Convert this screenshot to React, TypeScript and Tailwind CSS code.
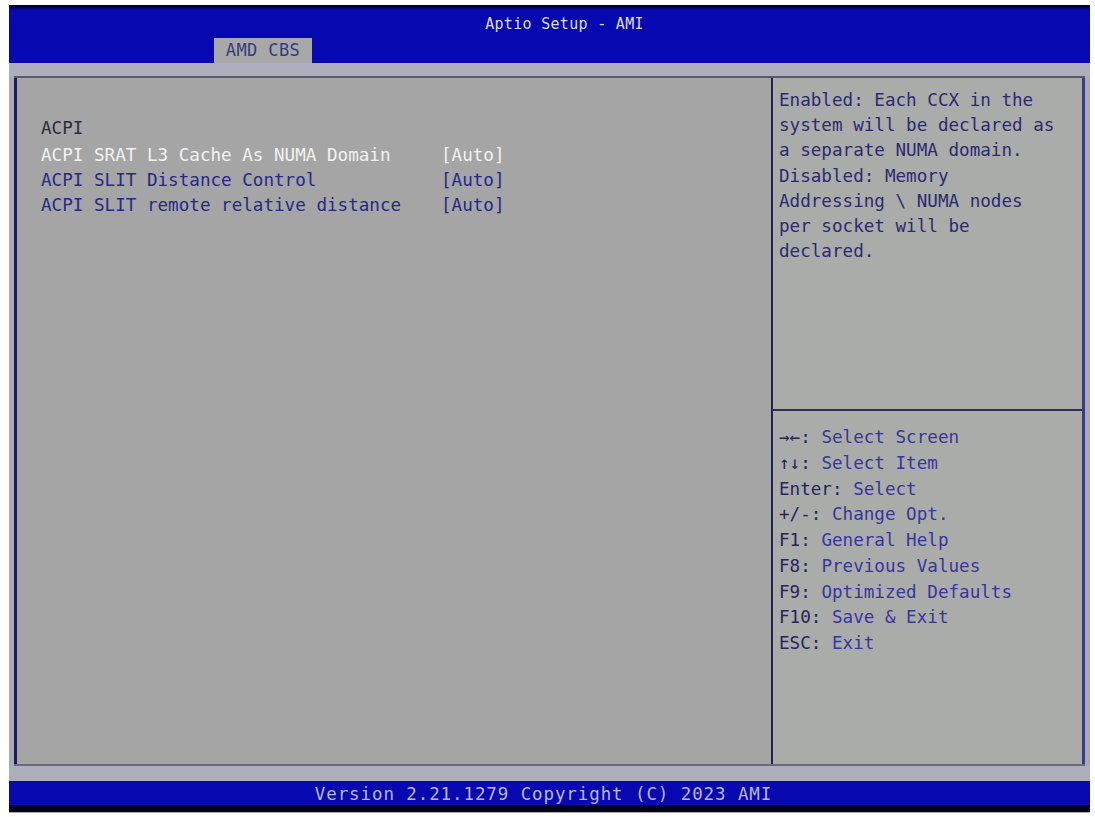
const ITEMS = [
  { label: 'ACPI SRAT L3 Cache As NUMA Domain', value: '[Auto]', selected: true },
  { label: 'ACPI SLIT Distance Control', value: '[Auto]', selected: false },
  { label: 'ACPI SLIT remote relative distance', value: '[Auto]', selected: false },
]

const HELP = [
  'Enabled: Each CCX in the',
  'system will be declared as',
  'a separate NUMA domain.',
  'Disabled: Memory',
  'Addressing \\ NUMA nodes',
  'per socket will be',
  'declared.',
]

const KEYS = [
  ['→←:', 'Select Screen'],
  ['↑↓:', 'Select Item'],
  ['Enter:', 'Select'],
  ['+/-:', 'Change Opt.'],
  ['F1:', 'General Help'],
  ['F8:', 'Previous Values'],
  ['F9:', 'Optimized Defaults'],
  ['F10:', 'Save & Exit'],
  ['ESC:', 'Exit'],
]

export default function App() {
  return (
    <div className="w-[1095px] h-[817px] bg-white pl-[9px] pt-[5px] font-['DejaVu_Sans_Mono',monospace]">
      <div className="w-[1081px] h-[808px] flex flex-col bg-[#aaaab6]">
        {/* Header */}
        <div className="h-[58px] flex flex-col bg-[#0808b0]">
          <div className="h-[5px] bg-linear-to-b from-[#000018] to-[#0808b0]" />
          <div className="h-[28px] flex items-center justify-center pl-[30px] text-[15px] text-[#dcdcee] tracking-[0.3px]">
            Aptio Setup - AMI
          </div>
          <div className="flex-1 flex items-end">
            <div className="ml-[205px] w-[98px] h-[25px] bg-[#a8a8a8] flex items-center justify-center text-[17px] text-[#3a3a7a] tracking-[0.4px]">
              AMD CBS
            </div>
          </div>
        </div>

        <div className="h-[13px] bg-[#aeaebc]" />

        {/* Panels */}
        <div className="h-[690px] mx-[5px] flex border-t-2 border-b-2 border-t-[#5a5a6a] border-b-[#6a6a78]">
          <div className="w-[757px] bg-[#a5a5a5] border-l-[3px] border-l-[#1c1c5a] pl-[24px] pt-[38px] text-[17.6px] leading-[25px]">
            <div className="text-[#2c2c3c] mb-[2px]">ACPI</div>
            {ITEMS.map((item) => (
              <div key={item.label} className={item.selected ? 'flex text-[#f2f2f2]' : 'flex text-[#28288a]'}>
                <span className="w-[400px] whitespace-pre">{item.label}</span>
                <span>{item.value}</span>
              </div>
            ))}
          </div>
          <div className="flex-1 flex flex-col bg-[#aaaca9] border-l-2 border-r-[3px] border-l-[#222250] border-r-[#3a3a8a]">
            <div className="h-[331px] pl-[6px] pt-[10px] text-[17.6px] leading-[25.2px] text-[#2a2a72]">
              {HELP.map((line) => (
                <div key={line} className="whitespace-pre">{line}</div>
              ))}
            </div>
            <div className="h-[2px] bg-[#2e2e5e]" />
            <div className="pl-[6px] pt-[14px] text-[17.6px] leading-[25.75px]">
              {KEYS.map(([k, d]) => (
                <div key={k} className="whitespace-pre">
                  <span className="text-[#24245e]">{k}</span>
                  <span className="text-[#3636a0]"> {d}</span>
                </div>
              ))}
            </div>
          </div>
        </div>

        <div className="h-[15px] bg-[#aeaebc]" />

        {/* Footer */}
        <div className="h-[31px] flex flex-col">
          <div className="h-[24px] bg-[#0808b0] flex items-center justify-center pr-[12px] text-[17.5px] tracking-[0.9px] text-[#b8b8e0] pt-[2px]">
            Version 2.21.1279 Copyright (C) 2023 AMI
          </div>
          <div className="flex-1 bg-[#040418]" />
        </div>
      </div>
    </div>
  )
}
